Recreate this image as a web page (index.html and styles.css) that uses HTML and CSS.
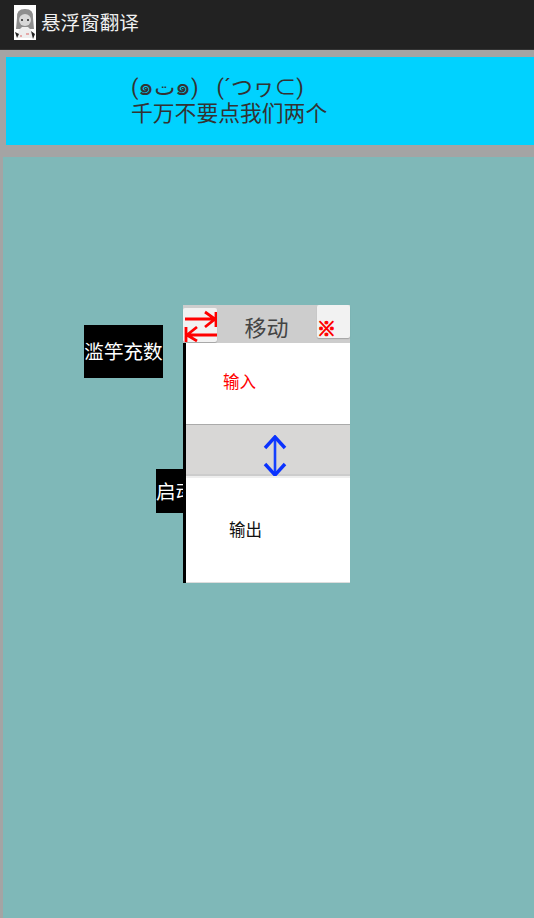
FILE: index.html
```html
<!DOCTYPE html>
<html lang="zh">
<head>
	<meta charset="UTF-8">
	<title>悬浮窗翻译</title>
	<link rel="stylesheet" href="styles.css">
</head>
<body>
	<div class='bar'>
		<svg class='logo' width="22" height="35" viewBox="0 0 22 35">
			<rect width="22" height="35" fill="#fff"/>
			<path d="M3 13 Q2 4 11 4 Q20 4 19 13 L20 24 L2 24 Z" fill="#8e8e8e"/>
			<ellipse cx="11" cy="15" rx="6" ry="6" fill="#d8d8d8"/>
			<path d="M7 15h2M13 15h2" stroke="#222" stroke-width="1.500"/>
			<path d="M5 25 L8 22 L14 22 L17 25 L19 33 L3 33 Z" fill="#eee"/>
			<path d="M1 27 L5 29 L3 33 Z M17 26 L21 29 L19 34 Z" fill="#222"/>
			<path d="M6 31h2M12 29h3" stroke="#d66" stroke-width="1"/>
		</svg>
		<span class='bar-title'>悬浮窗翻译</span>
	</div>
	<div class='banner'>
		<div class='banner-text'>
			<p>(<span class='eye'>๑</span>ت<span class='eye'>๑</span>)<span class='face-two'>(´つヮ⊂)</span></p>
			<p>千万不要点我们两个</p>
		</div>
	</div>
	<div class='canvas'>
		<div class='side-btn fill-btn'>滥竽充数</div>
		<div class='side-btn start-btn'><span>启动</span></div>
		<div class='float-win'>
			<div class='win-head'>
				<div class='key swap-key'>
					<svg width="34" height="34" viewBox="0 0 34 34">
						<path d="M2 11H33M33 4V19M22 4L32 11L22 19" fill="none" stroke="#f00" stroke-width="2.800"/>
						<path d="M34 27H4M3 19V34M14 19L4 27L14 33" fill="none" stroke="#f00" stroke-width="2.800"/>
					</svg>
				</div>
				<span class='win-title'>移动</span>
				<div class='key close-key'>※</div>
			</div>
			<div class='win-body'>
				<div class='pane input-pane'>输入</div>
				<div class='divider'>
					<svg width="24" height="42" viewBox="0 0 24 42">
						<path d="M12 2V40" fill="none" stroke="#1440ff" stroke-width="2.600"/>
						<path d="M2 13L12 2L22 13M2 29L12 40L22 29" fill="none" stroke="#0a32ff" stroke-width="3.400"/>
					</svg>
				</div>
				<div class='pane output-pane'>输出</div>
			</div>
		</div>
	</div>
</body>
</html>
```

FILE: styles.css
```css
*{
	padding: 0;
	margin: 0;
	box-sizing: border-box;
}
html,body{
	height: 100%;
	overflow: hidden;
}
body{
	display: flex;
	flex-direction: column;
	background: #a4a4a4;
	font-family: "Roboto", "Noto Sans CJK SC", "DejaVu Sans", sans-serif;
}
.bar{
	display: flex;
	align-items: center;
	flex: none;
	height: 50px;
	padding: 0 14px 5px;
	background: #222;
	border-bottom: 1px solid #333;
}
.logo{
	flex: none;
	margin-right: 5px;
}
.bar-title{
	margin-bottom: 1px;
	color: #f0f0f0;
	font-size: 19.600px;
}
.banner{
	flex: none;
	height: 88px;
	margin: 7px 0 0 6px;
	padding-left: 125px;
	background: #00d2ff;
	display: flex;
	align-items: center;
}
.banner-text{
	color: #333;
	font-size: 21.800px;
	line-height: 26px;
	white-space: nowrap;
}
.eye{
	font-size: 25px;
	line-height: 0;
	font-weight: 300;
}
.face-two{
	margin-left: 18px;
}
.canvas{
	position: relative;
	flex: 1;
	margin: 12px 0 0 3px;
	background: #7fb8b8;
}
.side-btn{
	position: absolute;
	display: flex;
	align-items: center;
	background: #000;
	color: #fff;
	font-size: 19.600px;
	white-space: nowrap;
	overflow: hidden;
}
.fill-btn{
	left: 81px;
	top: 168px;
	width: 79px;
	height: 53px;
	padding-bottom: 3px;
	justify-content: center;
}
.start-btn{
	left: 153px;
	top: 312px;
	width: 29px;
	height: 44px;
	padding-bottom: 2px;
}
.float-win{
	position: absolute;
	left: 180px;
	top: 148px;
	width: 167px;
	height: 278px;
	display: flex;
	flex-direction: column;
}
.win-head{
	display: flex;
	align-items: flex-start;
	justify-content: space-between;
	flex: none;
	height: 38px;
	background: #cdcdcd;
}
.key{
	background: #f2f2f2;
	border-radius: 2px;
	box-shadow: 0 1px 1px rgba(0,0,0,.2);
}
.swap-key{
	width: 34px;
	height: 34px;
	margin-top: 3px;
	overflow: hidden;
}
.swap-key svg{
	display: block;
}
.win-title{
	margin-top: 9px;
	margin-left: -1px;
	color: #444;
	font-size: 22px;
	line-height: 30px;
}
.close-key{
	width: 33px;
	height: 33px;
	padding-top: 13px;
	color: #f00;
	font-family: "Noto Sans CJK SC", sans-serif;
	font-size: 19px;
	line-height: 20px;
	font-weight: 900;
	-webkit-text-stroke: 1px #f00;
}
.win-body{
	flex: 1;
	display: flex;
	flex-direction: column;
	border-left: 3px solid #000;
	background: #fff;
}
.pane{
	display: flex;
	align-items: center;
	font-size: 16.500px;
}
.input-pane{
	height: 81px;
	padding: 0 0 5px 37px;
	color: #f00;
}
.output-pane{
	flex: 1;
	padding: 0 0 3px 43px;
	color: #111;
	border-top: 2px solid #eee;
	border-bottom: 1px solid #ddd;
}
.divider{
	display: flex;
	align-items: center;
	justify-content: center;
	height: 52px;
	padding: 12px 0 0 14px;
	background: #d8d7d6;
	border-top: 1px solid #aaa;
	border-bottom: 2px solid #ccc;
}
```
